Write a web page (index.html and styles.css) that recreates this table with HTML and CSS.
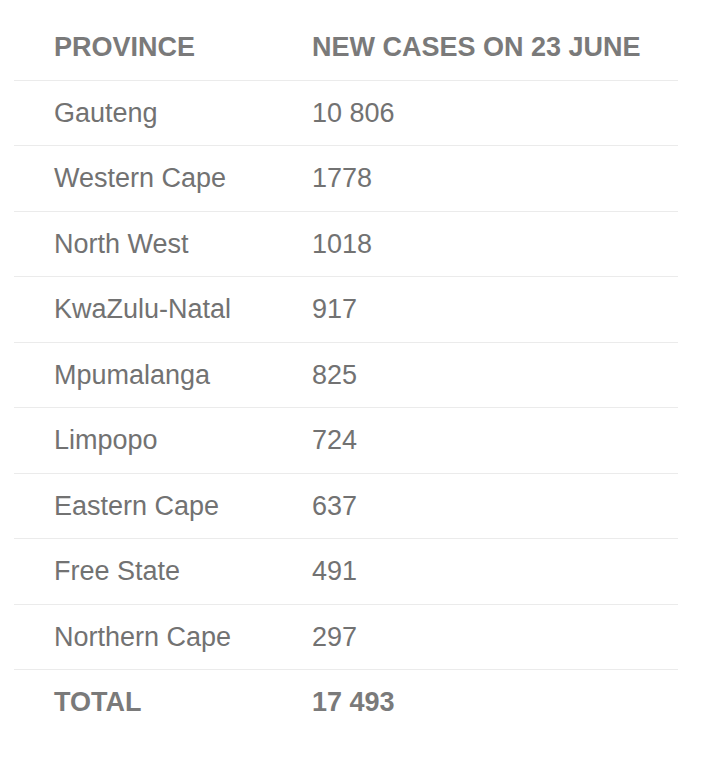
FILE: index.html
```html
<!DOCTYPE html>
<html>
<head>
<meta charset="utf-8">
<link rel="stylesheet" href="styles.css">
</head>
<body>
<table class="cases">
  <thead>
    <tr><th class="c1">PROVINCE</th><th class="c2">NEW CASES ON 23 JUNE</th></tr>
  </thead>
  <tbody>
    <tr><td class="c1">Gauteng</td><td class="c2">10 806</td></tr>
    <tr><td class="c1">Western Cape</td><td class="c2">1778</td></tr>
    <tr><td class="c1">North West</td><td class="c2">1018</td></tr>
    <tr><td class="c1">KwaZulu-Natal</td><td class="c2">917</td></tr>
    <tr><td class="c1">Mpumalanga</td><td class="c2">825</td></tr>
    <tr><td class="c1">Limpopo</td><td class="c2">724</td></tr>
    <tr><td class="c1">Eastern Cape</td><td class="c2">637</td></tr>
    <tr><td class="c1">Free State</td><td class="c2">491</td></tr>
    <tr><td class="c1">Northern Cape</td><td class="c2">297</td></tr>
    <tr class="total"><td class="c1">TOTAL</td><td class="c2">17 493</td></tr>
  </tbody>
</table>
</body>
</html>
```
FILE: styles.css
```css
html, body {
  margin: 0;
  padding: 0;
  background: #ffffff;
}
body {
  padding: 15px 0 0 14px;
  font-family: "Liberation Sans", Arial, sans-serif;
}
.cases {
  width: 664px;
  border-collapse: collapse;
  font-size: 27px;
  color: #727272;
}
.cases th,
.cases td {
  height: 64.5px;
  padding: 0;
  text-align: left;
  vertical-align: middle;
  border-bottom: 1px solid #ebebeb;
  line-height: 30px;
}
.cases th {
  font-weight: bold;
  color: #7a7a7a;
}
.cases .c1 {
  width: 258px;
  padding-left: 40px;
}
.cases .total td {
  border-bottom: none;
  font-weight: bold;
  color: #7a7a7a;
}
```
